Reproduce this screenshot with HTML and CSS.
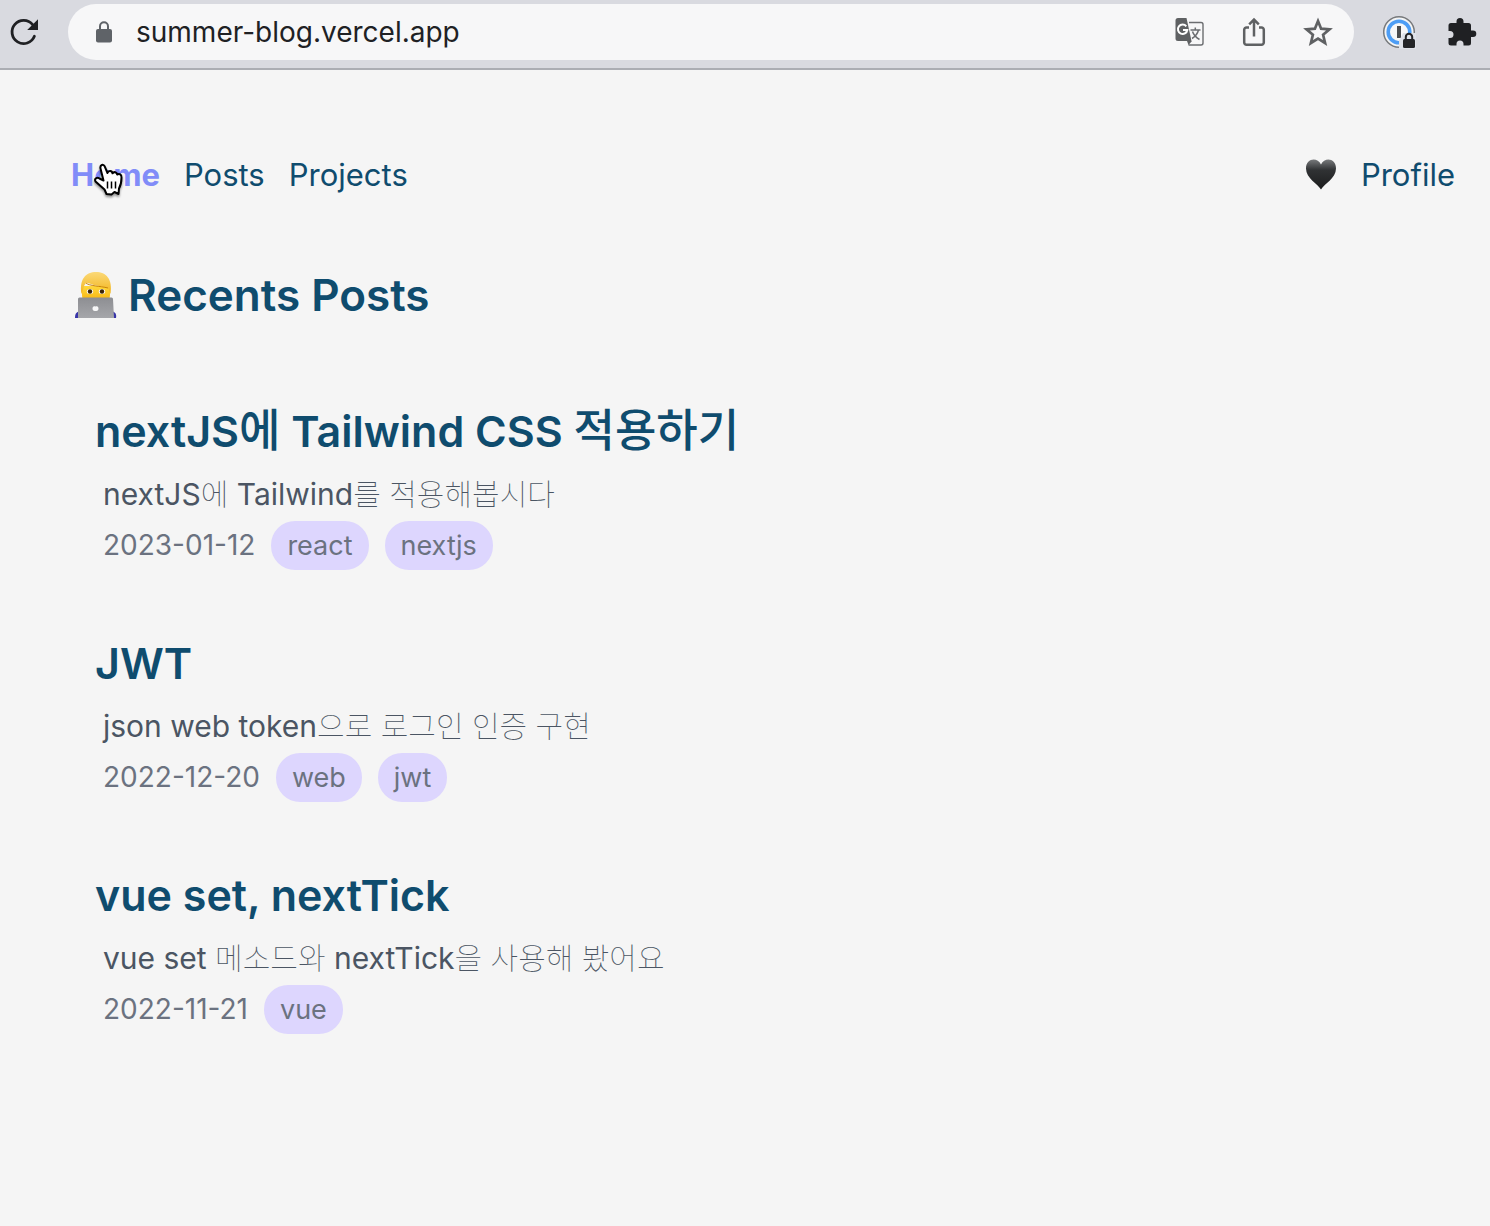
FILE: index.html
```html
<!DOCTYPE html>
<html lang="ko">
<head>
<meta charset="utf-8">
<meta name="viewport" content="width=device-width, initial-scale=1">
<title>summer-blog</title>
<link rel="stylesheet" href="styles.css">
</head>
<body>
<div class="toolbar">
  <button class="icon-btn reload" aria-label="Reload">
    <svg width="32" height="32" viewBox="0 0 32 32"><path d="M27.400 20.300A11.600 11.600 0 1 1 25.600 8.600" fill="none" stroke="#1f2023" stroke-width="2.800" stroke-linecap="round"/><path d="M31 3.200V14H20.200Z" fill="#1f2023"/></svg>
  </button>
  <div class="address">
    <svg class="lock" width="16" height="22" viewBox="0 0 16 22"><rect y="8" width="16" height="13.500" rx="2" fill="#5f6368"/><path d="M4 9V5.200a4 4 0 0 1 8 0V9" fill="none" stroke="#5f6368" stroke-width="2"/></svg>
    <input class="url" type="text" aria-label="Address" value="summer-blog.vercel.app">
    <div class="actions">
      <button class="icon-btn" aria-label="Translate">
        <svg width="32" height="32" viewBox="0 0 32 32"><path d="M15 6.500H27a2 2 0 0 1 2 2V27a2 2 0 0 1-2 2H14.500" fill="#f7f7f8" stroke="#6b6d70" stroke-width="1.400"/><path d="M4 2H12.500l5 23H4a2.500 2.500 0 0 1-2.500-2.500V4.500A2.500 2.500 0 0 1 4 2Z" fill="#5f6163"/><path d="M13 25h5l-3.500 4Z" fill="#5f6163"/><path d="M12.300 10.300A4.700 4.700 0 1 0 13.300 14H9" fill="none" stroke="#fff" stroke-width="2"/><path d="M16.500 14h10M21.300 11.500V14M24.500 14c-1 4-4 7-6.500 8.500M18.500 15.500c1 3 3.500 6 7 8" fill="none" stroke="#6b6d70" stroke-width="1.500"/></svg>
      </button>
      <button class="icon-btn" aria-label="Share">
        <svg width="32" height="32" viewBox="0 0 32 32"><path d="M11 11.500H8.500A2.300 2.300 0 0 0 6.200 13.800V26.500a2.300 2.300 0 0 0 2.300 2.300h15a2.300 2.300 0 0 0 2.300-2.300V13.800a2.300 2.300 0 0 0-2.300-2.300H21M16 20.500V4M11.200 8.300 16 3.500l4.800 4.800" fill="none" stroke="#5f6163" stroke-width="2.500"/></svg>
      </button>
      <button class="icon-btn" aria-label="Bookmark">
        <svg width="32" height="32" viewBox="0 0 32 32"><path d="M16 5 19.100 12.700 27.500 13.300 21.100 18.700 23.100 27 16 22.500 8.900 27 10.900 18.700 4.500 13.300 12.900 12.700Z" fill="none" stroke="#5f6163" stroke-width="2.700"/></svg>
      </button>
    </div>
  </div>
  <button class="icon-btn" aria-label="Password manager">
    <svg width="34" height="34" viewBox="0 0 34 34"><circle cx="16" cy="17" r="15.300" fill="#f3f4f5" stroke="#77797c" stroke-width="1.500"/><circle cx="16" cy="17" r="10.800" fill="#f7f7f8" stroke="#4d9df5" stroke-width="3.600"/><rect x="14" y="11" width="4" height="12" fill="#4a4c4f"/><path d="M16 34V26l4-8h13v16Z" fill="#dfe2e9"/><rect x="20" y="24" width="12" height="9" rx="1.500" fill="#242528"/><path d="M22.800 25v-3a3.200 3.200 0 0 1 6.400 0v3" fill="none" stroke="#242528" stroke-width="2"/></svg>
  </button>
  <button class="icon-btn" aria-label="Extensions">
    <svg width="32" height="32" viewBox="0 0 32 32"><path d="M5.500 7H10.500V5.500a3.500 3.500 0 0 1 7 0V7H22.500A2.500 2.500 0 0 1 25 9.500V14.500H27a3.300 3.300 0 0 1 0 6.600H25V27a2.500 2.500 0 0 1-2.500 2.500H17.500V28a3.500 3.500 0 0 0-7 0V29.500H5A2.500 2.500 0 0 1 2.500 27V22H4a3.500 3.500 0 0 0 0-7H2.500V9.500A2.500 2.500 0 0 1 5 7Z" fill="#1f2023"/></svg>
  </button>
</div>

<header class="site-header">
  <nav class="nav">
    <a class="nav-link active" href="#home">Home
      <svg class="pointer" width="36" height="40" viewBox="0 0 36 40"><path d="M12.500 20.500 9.500 8.500C8.700 5 12.500 3.400 13.800 6.600L16.500 13C17.500 10.300 21 10.500 21.500 13.300C23 11.300 25.700 12 26.200 14.500C28.500 13.300 30.500 14.500 30.500 17.500C30.500 22 30 25 28 28.500L27.500 34L23.500 32L20.500 34.500L15.500 34L13.500 29.500L4.500 21.500C3 18.500 6 17 8.500 18.500Z" fill="#fff" stroke="#000" stroke-width="2" stroke-linejoin="round"/><path d="M16.500 21.500V28.500M20.500 21.500V28.500M24.500 21.500V28.500" stroke="#000" stroke-width="1.500"/></svg>
    </a>
    <a class="nav-link" href="#posts">Posts</a>
    <a class="nav-link" href="#projects">Projects</a>
  </nav>
  <nav class="nav">
    <button class="icon-btn" aria-label="Toggle theme">
      <svg width="32" height="32" viewBox="0 0 32 32"><defs><linearGradient id="gloss" x1="0" y1="0" x2="0" y2="1"><stop offset="0" stop-color="#77797b"/><stop offset=".35" stop-color="#303234"/><stop offset="1" stop-color="#1b1c1d"/></linearGradient></defs><path d="M16 30.500C13 25 1 19.500 1 9.500C1 -1 12.500-2 16 5.500C19.500-2 31 -1 31 9.500C31 19.500 19 25 16 30.500Z" fill="url(#gloss)"/></svg>
    </button>
    <a class="nav-link" href="#profile">Profile</a>
  </nav>
</header>

<main class="content">
  <h1 class="section-title">
    <svg width="44" height="48" viewBox="0 0 44 48" aria-hidden="true"><defs><linearGradient id="skin" x1="0" y1="0" x2="0" y2="1"><stop offset="0" stop-color="#ffd83d"/><stop offset="1" stop-color="#f5a800"/></linearGradient><linearGradient id="hair" x1="0" y1="0" x2="0" y2="1"><stop offset="0" stop-color="#fbd978"/><stop offset="1" stop-color="#f2b41c"/></linearGradient><linearGradient id="metal" x1="0" y1="0" x2="0" y2="1"><stop offset="0" stop-color="#8d8e92"/><stop offset="1" stop-color="#a5a6aa"/></linearGradient></defs><path d="M1 47C1 42 3 40 8 40H36C40 40 43 42 42 47Z" fill="#3734a8"/><path d="M8 15H36V24C36 31 30 35 22 35S8 31 8 24Z" fill="url(#skin)"/><path d="M7.500 23C5 8 12 1 22 1S39 8 36.500 23L34.500 18C33 15 27 16 20 14C16 13 13 11 12 12C9 15 10 18 7.500 23Z" fill="url(#hair)"/><path d="M12 12C15 15 26 15 34 17" fill="none" stroke="#c98208"/><ellipse cx="16" cy="20.500" rx="3.200" ry="2.500" fill="#fff"/><ellipse cx="28" cy="20.500" rx="3.200" ry="2.500" fill="#fff"/><circle cx="16" cy="20.500" r="2.200" fill="#3b2408"/><circle cx="28" cy="20.500" r="2.200" fill="#3b2408"/><path d="M5.500 26.500H37.500a1.500 1.500 0 0 1 1.500 1.500L40 47H4L4 28A1.500 1.500 0 0 1 5.500 26.500Z" fill="url(#metal)"/><path d="M21.500 35.500c2-1 3 .5 3 2s-1 3-3 2.500c-2 .5-3-1-3-2.500s1-3 3-2Z" fill="#f7f7f8"/></svg>
    <span>Recents Posts</span>
  </h1>
  <div class="posts">
    <article class="post">
      <h2 class="post-title"><a href="#post-1">nextJS<span class="ko">에</span> Tailwind CSS <span class="ko">적용하기</span></a></h2>
      <p class="summary">nextJS<span class="ko">에</span> Tailwind<span class="ko">를 적용해봅시다</span></p>
      <div class="meta"><time datetime="2023-01-12">2023-01-12</time><span class="tag">react</span><span class="tag">nextjs</span></div>
    </article>
    <article class="post">
      <h2 class="post-title"><a href="#post-2">JWT</a></h2>
      <p class="summary">json web token<span class="ko">으로 로그인 인증 구현</span></p>
      <div class="meta"><time datetime="2022-12-20">2022-12-20</time><span class="tag">web</span><span class="tag">jwt</span></div>
    </article>
    <article class="post">
      <h2 class="post-title"><a href="#post-3">vue set, nextTick</a></h2>
      <p class="summary">vue set <span class="ko">메소드와</span> nextTick<span class="ko">을 사용해 봤어요</span></p>
      <div class="meta"><time datetime="2022-11-21">2022-11-21</time><span class="tag">vue</span></div>
    </article>
  </div>
</main>
</body>
</html>
```
FILE: styles.css
```css
* { box-sizing: border-box; }

body {
  margin: 0;
  min-height: 100vh;
  background: #f5f5f5;
  color: #0f4c6e;
  font-family: Inter, "Noto Sans CJK KR", sans-serif;
}

a { color: inherit; text-decoration: none; }
h1, h2, p { margin: 0; }

.icon-btn {
  display: flex;
  flex: none;
  padding: 0;
  border: 0;
  background: none;
}

/* Browser toolbar */
.toolbar {
  display: flex;
  align-items: center;
  gap: 29px;
  height: 70px;
  padding: 0 12px 4px 7px;
  border-bottom: 2px solid #abadb3;
  background: #d9dae0;
}

.address {
  display: flex;
  flex: 1;
  align-items: center;
  height: 56px;
  padding: 0 20px 0 28px;
  border-radius: 28px;
  background: #f7f7f8;
}

.url {
  flex: 1;
  min-width: 0;
  padding: 0 0 0 24px;
  border: 0;
  outline: 0;
  background: none;
  color: #202124;
  font: 400 28px/40px Inter, sans-serif;
}

.actions { display: flex; gap: 32px; }

/* Site navigation */
.site-header {
  display: flex;
  align-items: center;
  justify-content: space-between;
  padding: 81px 35px 0 71px;
}

.nav {
  display: flex;
  align-items: center;
  gap: 24px;
}

.nav-link {
  position: relative;
  font-size: 31px;
  line-height: 48px;
}

.nav-link.active { color: #818cf8; font-weight: 700; }

.pointer {
  position: absolute;
  top: 9px;
  left: 20px;
  filter: drop-shadow(0 2px 1px rgb(0 0 0 / 40%));
}

/* Posts */
.content { padding: 64px 74px; }

.section-title {
  display: flex;
  align-items: center;
  gap: 10px;
  font-size: 44px;
  font-weight: 600;
  line-height: 64px;
}

.posts {
  display: flex;
  flex-direction: column;
  gap: 61px;
  padding: 72px 21px 0;
}

.post-title {
  font-size: 43px;
  font-weight: 600;
  line-height: 64px;
}

.post-title .ko { font-size: 45px; font-weight: 500; line-height: 1; }

.summary {
  margin-top: 7px;
  padding-left: 8px;
  color: #4b5563;
  font-size: 30px;
  line-height: 49px;
}

.summary .ko { font-weight: 100; line-height: 1; }

.meta {
  display: flex;
  align-items: center;
  gap: 16px;
  margin-top: 2px;
  padding-left: 8px;
  color: #6b7280;
  font-size: 28px;
  line-height: 49px;
}

.tag {
  padding: 0 16px;
  border-radius: 24px;
  background: #ddd6fe;
  font-size: 27px;
}
```
